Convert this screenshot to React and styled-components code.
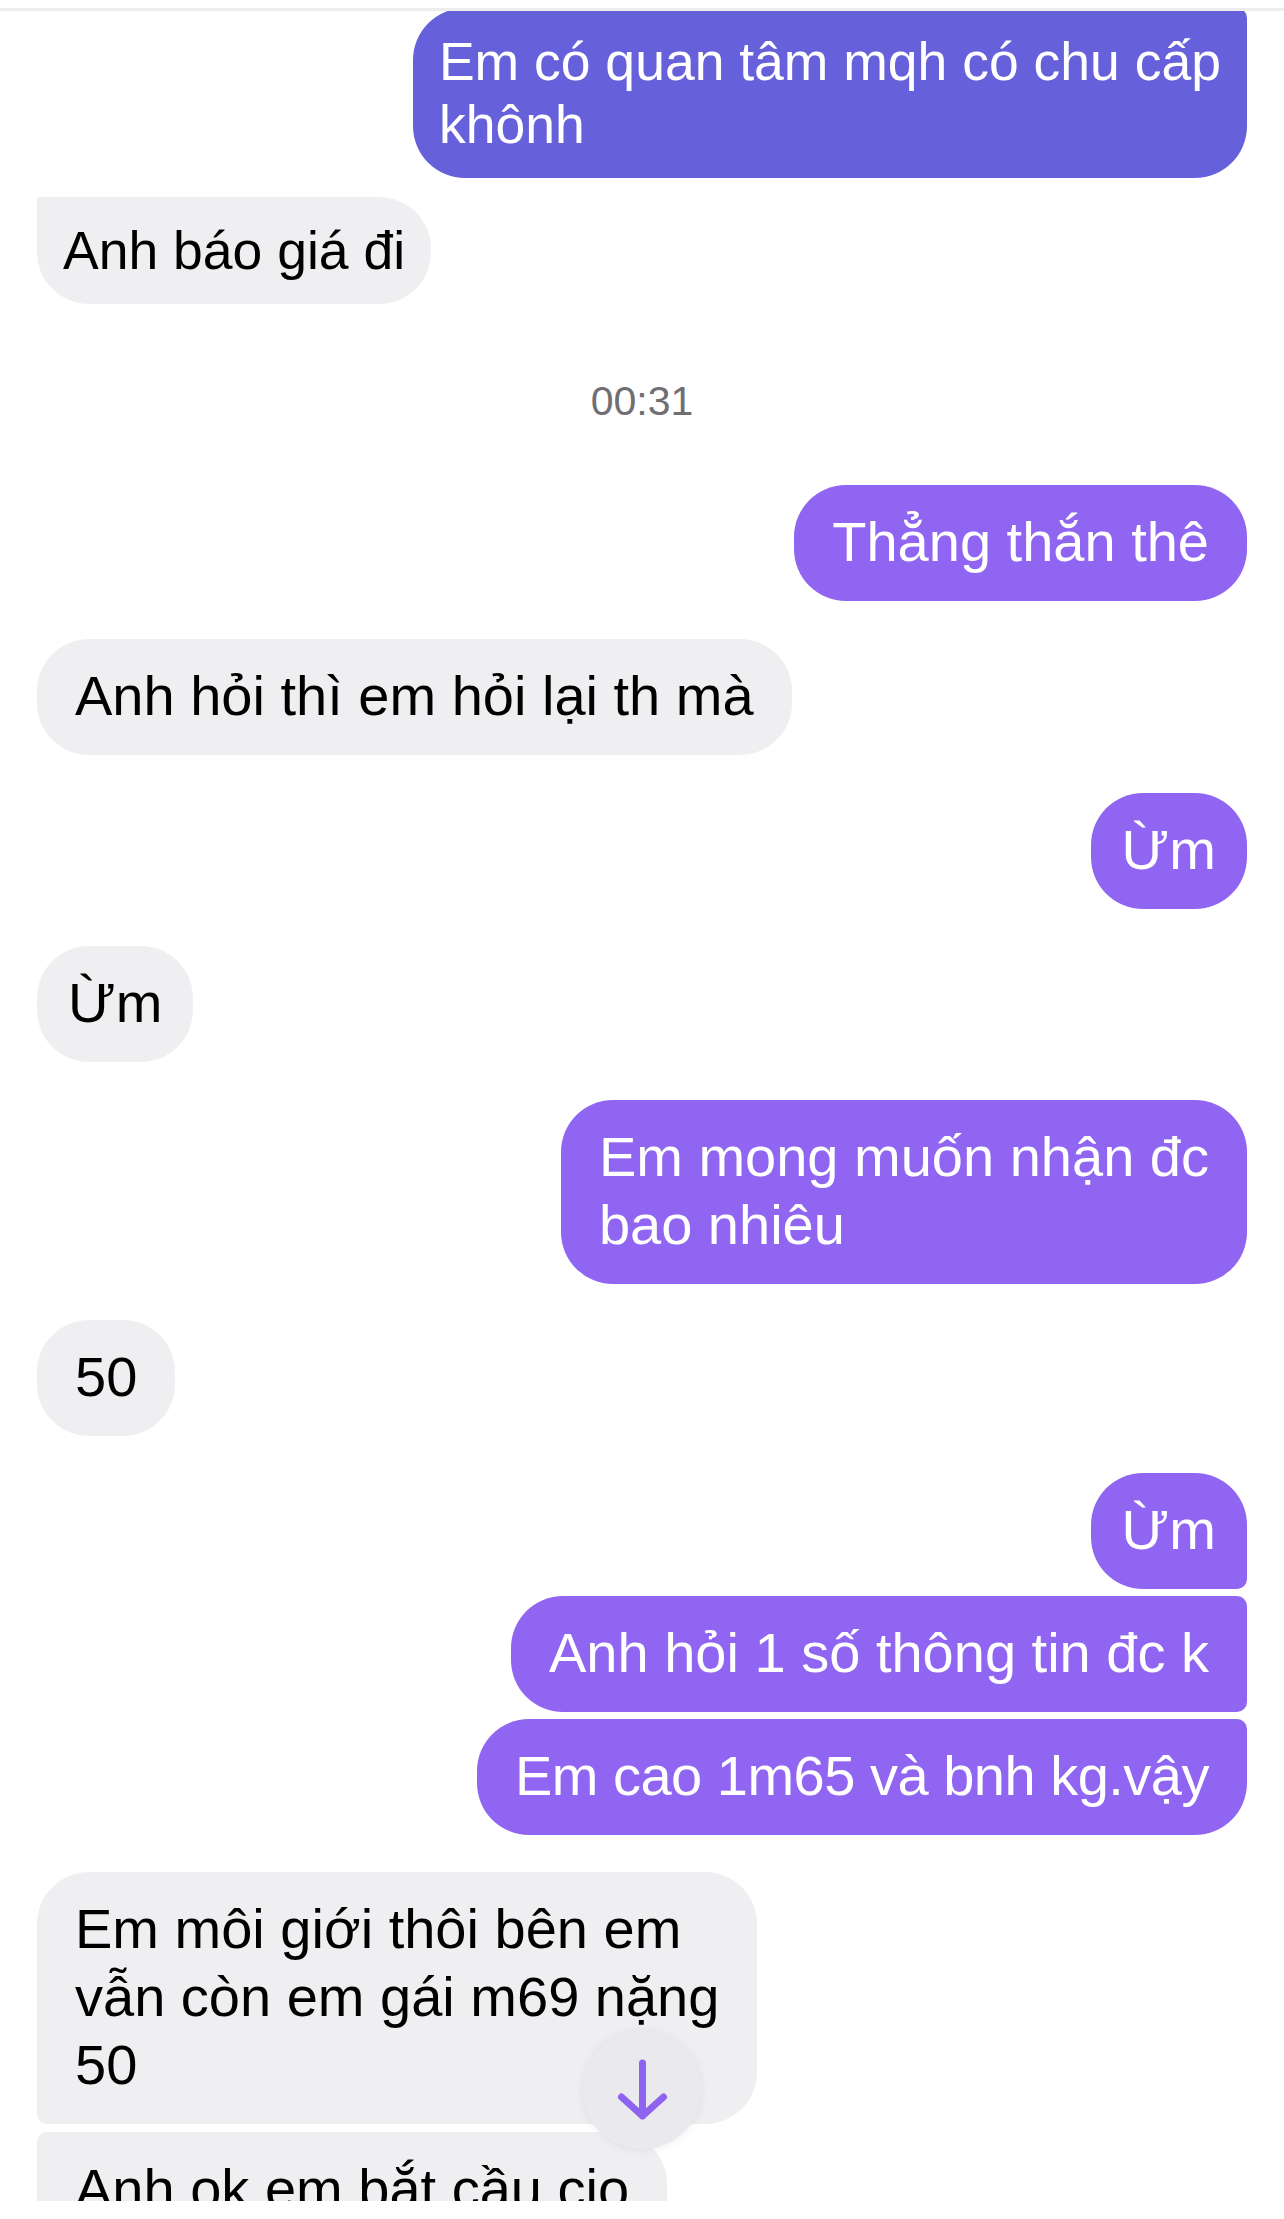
import React from "react";
import styled, { createGlobalStyle } from "styled-components";

const GlobalStyle = createGlobalStyle`
  html, body {
    margin: 0;
    padding: 0;
    background: #ffffff;
  }
  body {
    font-family: "Liberation Sans", Arial, sans-serif;
    -webkit-font-smoothing: antialiased;
  }
`;

const L = 52;
const S = 10;

const Screen = styled.div`
  width: 1284px;
  height: 2219px;
  background: #ffffff;
  overflow: hidden;
`;

const TopEdge = styled.div`
  height: 8px;
  border-bottom: 3px solid #ededed;
`;

const Viewport = styled.div`
  position: relative;
  height: 2190px;
  overflow: hidden;
`;

// the list is scrolled a little, so the first bubble is cut at the top
const Thread = styled.div`
  display: flex;
  flex-direction: column;
  padding: 0 37px;
  margin-top: -3px;
`;

const padFor = ({ $compact, $tight }) => {
  if ($compact) return "22px 26px 22px";
  if ($tight) return "23px 31px 25px";
  return "23px 38px 25px";
};

const Bubble = styled.div`
  align-self: ${({ $mine }) => ($mine ? "flex-end" : "flex-start")};
  margin-top: ${({ $gap }) => $gap}px;
  background: ${({ $mine, $deep }) =>
    $deep ? "#6661da" : $mine ? "#8f65f1" : "#efeff1"};
  color: ${({ $mine }) => ($mine ? "#ffffff" : "#000000")};
  font-size: ${({ $compact }) => ($compact ? 53.5 : 56)}px;
  line-height: ${({ $compact }) => ($compact ? 63 : 68)}px;
  letter-spacing: ${({ $squeeze }) => ($squeeze ? "-0.5px" : "normal")};
  padding: ${padFor};
  border-radius: ${({ $r }) => $r.map((v) => v + "px").join(" ")};
  white-space: nowrap;
`;

const Line = styled.div``;

const Stamp = styled.div`
  margin-top: ${({ $gap }) => $gap}px;
  text-align: center;
  font-size: 41px;
  line-height: 48px;
  color: #6e6e73;
`;

const ScrollDown = styled.button`
  position: absolute;
  left: 50%;
  bottom: 52px;
  transform: translateX(-50%);
  width: 119px;
  height: 119px;
  border: none;
  border-radius: 50%;
  background: #e9e9ee;
  box-shadow: 0 1px 8px rgba(0, 0, 0, 0.07);
  display: flex;
  align-items: center;
  justify-content: center;
  padding: 0;
`;

const messages = [
  { mine: true, deep: true, compact: true, gap: 0, r: [L, S, L, L], lines: ["Em có quan tâm mqh có chu cấp", "khônh"] },
  { compact: true, gap: 19, r: [4, L, L, L], lines: ["Anh báo giá đi"] },
  { stamp: "00:31", gap: 73 },
  { mine: true, gap: 60, r: [L, L, L, L], lines: ["Thẳng thắn thê"] },
  { gap: 38, r: [L, L, L, L], lines: ["Anh hỏi thì em hỏi lại th mà"] },
  { mine: true, tight: true, gap: 38, r: [L, L, L, L], lines: ["Ừm"] },
  { tight: true, gap: 37, r: [L, L, L, L], lines: ["Ừm"] },
  { mine: true, gap: 38, r: [L, L, L, L], lines: ["Em mong muốn nhận đc", "bao nhiêu"] },
  { gap: 36, r: [L, L, L, L], lines: ["50"] },
  { mine: true, tight: true, gap: 37, r: [L, L, S, L], lines: ["Ừm"] },
  { mine: true, gap: 7, r: [L, S, S, L], lines: ["Anh hỏi 1 số thông tin đc k"] },
  { mine: true, squeeze: true, gap: 7, r: [L, S, L, L], lines: ["Em cao 1m65 và bnh kg.vậy"] },
  { gap: 37, r: [L, L, L, S], lines: ["Em môi giới thôi bên em", "vẫn còn em gái m69 nặng", "50"] },
  { gap: 8, r: [S, L, L, L], lines: ["Anh ok em bắt cầu cio", "luôn nhé"] },
];

const ArrowDown = () => (
  <svg width="60" height="64" viewBox="-30 -32 60 64">
    <path
      d="M0 -27 V26 M-21 7 L0 26 L21 7"
      fill="none"
      stroke="#8e63f0"
      strokeWidth="7"
      strokeLinecap="round"
      strokeLinejoin="round"
    />
  </svg>
);

export default function App() {
  return (
    <Screen>
      <GlobalStyle />
      <TopEdge />
      <Viewport>
        <Thread>
          {messages.map((m, i) =>
            m.stamp ? (
              <Stamp key={i} $gap={m.gap}>
                {m.stamp}
              </Stamp>
            ) : (
              <Bubble
                key={i}
                $mine={m.mine}
                $deep={m.deep}
                $compact={m.compact}
                $tight={m.tight}
                $squeeze={m.squeeze}
                $gap={m.gap}
                $r={m.r}
              >
                {m.lines.map((t, j) => (
                  <Line key={j}>{t}</Line>
                ))}
              </Bubble>
            )
          )}
        </Thread>
        <ScrollDown aria-label="Cuộn xuống">
          <ArrowDown />
        </ScrollDown>
      </Viewport>
    </Screen>
  );
}
